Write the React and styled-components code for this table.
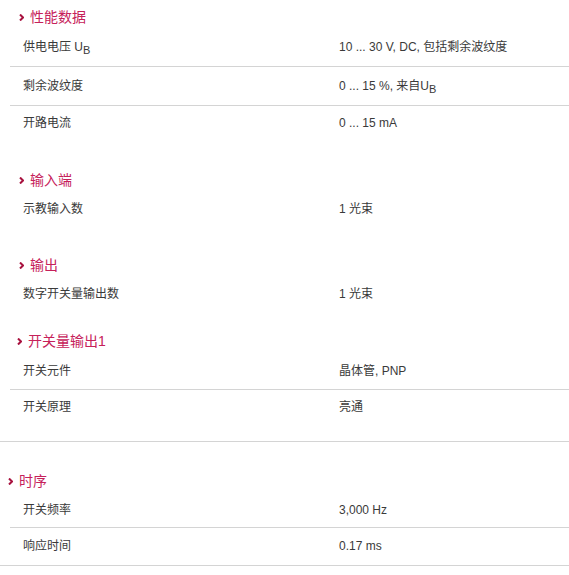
import React from 'react';
import styled, { createGlobalStyle } from 'styled-components';

const GlobalStyle = createGlobalStyle`
  html, body {
    margin: 0;
    padding: 0;
    background: #ffffff;
  }
  body {
    font-family: "Liberation Sans", Arial, "Noto Sans CJK SC", sans-serif;
  }
`;

const Page = styled.div`
  width: 569px;
  display: flex;
  flex-direction: column;
  color: #3a3a3a;
  font-size: 12px;
`;

const Section = styled.section`
  margin-top: ${(p) => p.$gap}px;
  display: flex;
  flex-direction: column;
`;

const Heading = styled.h3`
  margin: 0;
  height: 22px;
  display: flex;
  align-items: center;
  gap: 6px;
  padding-left: ${(p) => p.$indent}px;
  font-family: "Liberation Sans", Arial, "Noto Sans CJK SC", sans-serif;
  font-size: 14px;
  font-weight: normal;
  color: #c6215a;
  line-height: 22px;
`;

const ChevronIcon = styled.svg`
  flex-shrink: 0;
  margin-top: 1px;
`;

const Table = styled.div`
  margin-left: 10px;
  display: flex;
  flex-direction: column;
`;

const Row = styled.div`
  display: grid;
  grid-template-columns: 316px 1fr;
  height: ${(p) => p.$height}px;
  border-bottom: ${(p) => (p.$line ? '1px solid #d4d4d4' : 'none')};
`;

const Cell = styled.div`
  padding: ${(p) => p.$top || 11}px 13px 0;
  line-height: 17px;
  color: #3a3a3a;
  white-space: nowrap;
`;

const Sub = styled.sub`
  font-size: 11px;
  vertical-align: -3px;
  line-height: 0;
`;

const Divider = styled.hr`
  margin: 0;
  border: none;
  border-top: 1px solid #d4d4d4;
  width: 100%;
`;

const sections = [
    {
        title: '性能数据',
        indent: 19,
        gap: 6,
        rowHeight: 38,
        rows: [
            { label: <>供电电压 U<Sub>B</Sub></>, value: '10 ... 30 V, DC, 包括剩余波纹度', line: true },
            { label: '剩余波纹度', value: <>0 ... 15 %, 来自U<Sub>B</Sub></>, line: true },
            { label: '开路电流', value: '0 ... 15 mA', top: 9, height: 37 },
        ],
    },
    {
        title: '输入端',
        indent: 19,
        gap: 26,
        rowHeight: 38,
        rows: [{ label: '示教输入数', value: '1 光束', top: 10 }],
    },
    {
        title: '输出',
        indent: 19,
        gap: 25,
        rowHeight: 38,
        rows: [{ label: '数字开关量输出数', value: '1 光束', top: 10 }],
    },
    {
        title: '开关量输出1',
        indent: 17,
        gap: 16,
        rowHeight: 37,
        rows: [
            { label: '开关元件', value: '晶体管, PNP', line: true },
            { label: '开关原理', value: '亮通', height: 51, top: 9 },
        ],
        divider: true,
    },
    {
        title: '时序',
        indent: 8,
        gap: 28,
        rowHeight: 35,
        rows: [
            { label: '开关频率', value: '3,000 Hz', line: true, top: 10 },
            { label: '响应时间', value: '0.17 ms', height: 37, top: 10 },
        ],
        divider: true,
    },
];

function Chevron() {
    return (
        <ChevronIcon viewBox="0 0 5 7" width="5" height="7">
            <path d="M1 0.5 L4 3.5 L1 6.5" fill="none" stroke="#a8123f" strokeWidth="2" />
        </ChevronIcon>
    );
}

export default function App() {
    return (
        <Page>
            <GlobalStyle />
            {sections.map((s) => (
                <Section key={s.title} $gap={s.gap}>
                    <Heading $indent={s.indent}>
                        <Chevron />
                        <span>{s.title}</span>
                    </Heading>
                    <Table>
                        {s.rows.map((r, i) => (
                            <Row key={i} $height={r.height || s.rowHeight} $line={r.line}>
                                <Cell $top={r.top}>{r.label}</Cell>
                                <Cell $top={r.top}>{r.value}</Cell>
                            </Row>
                        ))}
                    </Table>
                    {s.divider && <Divider />}
                </Section>
            ))}
        </Page>
    );
}
